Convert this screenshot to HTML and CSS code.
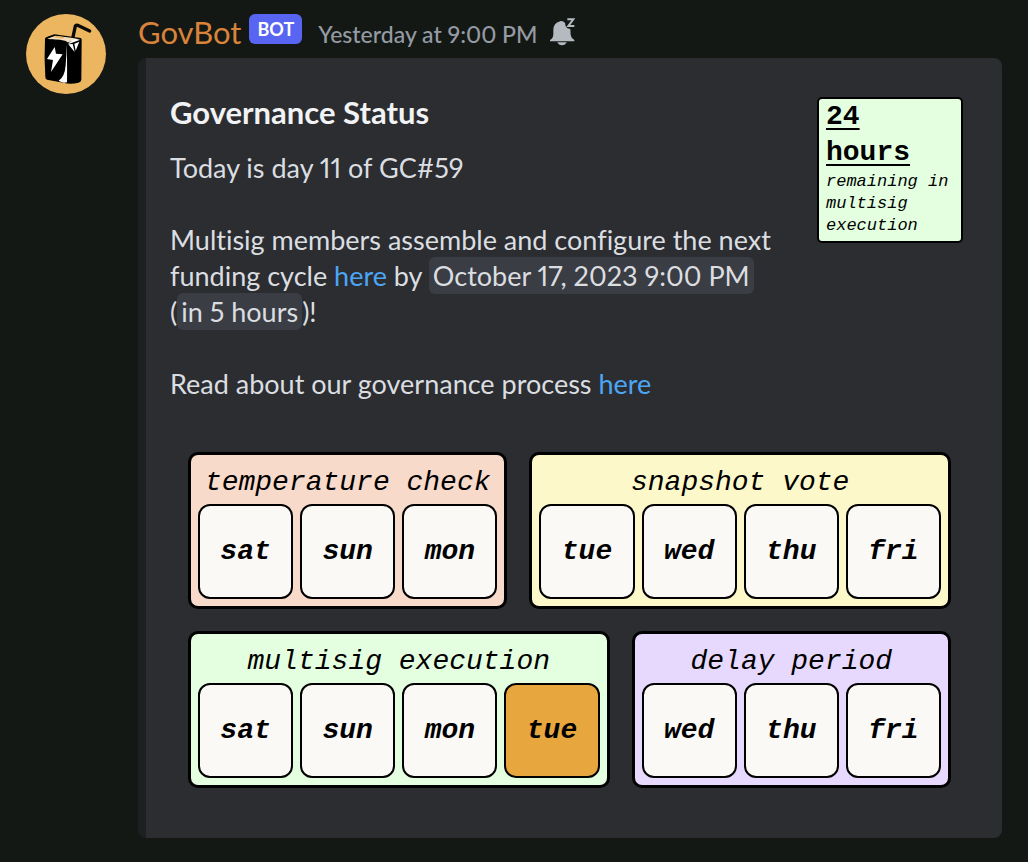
FILE: index.html
```html
<!DOCTYPE html>
<html lang="en">
<head>
<meta charset="utf-8">
<title>GovBot</title>
<link rel="stylesheet" href="styles.css">
</head>
<body>
<article class="message">
  <svg class="avatar" viewBox="48 42 240 240" aria-hidden="true">
    <circle cx="168" cy="162" r="120" fill="#ebb65f"/>
    <path d="M188 116 196 78Q198 74 203 76L239 93" fill="none" stroke="#0a0a08" stroke-width="10" stroke-linecap="round" stroke-linejoin="round"/>
    <path d="M105 116Q106 112 112 110L133 103 212 114Q216 116 215 121L214 240Q213 246 205 248 182 254 160 248L111 239Q106 237 106 231Q102 175 105 116Z" fill="#000"/>
    <path d="M112 116 136 107 184 113 208 118 174 127Z" fill="#f3dfc0"/>
    <path d="M130 112 140 108 164 112 158 116Z" fill="#ebb65f"/>
    <path d="M112 117 165 128 171 124 150 119Z" fill="#000"/>
    <path d="M174 130 193 118 211 119 178 131Z" fill="#fff"/>
    <path d="M175 133 188 132 194 156Z" fill="#fff"/>
    <path d="M193 131 208 125 197 152Z" fill="#fff"/>
    <path d="M169 134Q172 165 171 247L162 248Q153 247 146 242 164 232 167 196 170 165 169 134Z" fill="#fff"/>
    <path d="M134 141 111 177 129 180 123 216 158 163 138 161Z" fill="#fff"/>
  </svg>
  <div class="content">
    <header class="header">
      <span class="name">GovBot</span>
      <span class="badge">BOT</span>
      <time class="time">Yesterday at 9:00 PM</time>
      <svg class="bell" viewBox="960 50 78 90" role="img" aria-label="Silent message">
        <path d="M996 62Q1004 62 1008 68 1008 79 1015 84L1024 86 1025 104Q1026 113 1036 119V123H963V119Q973 114 973 102V88Q974 68 990 64Q993 62 996 62Z" fill="#b5bac1"/>
        <path d="M985 126H1013Q1009 135 999 135 989 135 985 126Z" fill="#b5bac1"/>
        <path d="M1015 57H1033L1018 77H1036" fill="none" stroke="#b5bac1" stroke-width="6"/>
      </svg>
    </header>
    <section class="embed">
      <div class="summary">
        <div class="copy">
          <h1 class="title">Governance Status</h1>
          <p class="text">Today is day 11 of GC#59</p>
          <p class="text">Multisig members assemble and configure the next funding cycle <a href="#">here</a> by <time class="stamp">October 17, 2023 9:00 PM</time> (<time class="stamp">in 5 hours</time>)!</p>
          <p class="text">Read about our governance process <a href="#">here</a></p>
        </div>
        <aside class="countdown">
          <strong class="hours">24 hours</strong>
          <em class="remaining">remaining in multisig execution</em>
        </aside>
      </div>
      <div class="calendar">
        <div class="week">
          <section class="phase three peach">
            <h2 class="label">temperature check</h2>
            <div class="days"><span class="day">sat</span><span class="day">sun</span><span class="day">mon</span></div>
          </section>
          <section class="phase four yellow">
            <h2 class="label">snapshot vote</h2>
            <div class="days"><span class="day">tue</span><span class="day">wed</span><span class="day">thu</span><span class="day">fri</span></div>
          </section>
        </div>
        <div class="week">
          <section class="phase four green">
            <h2 class="label">multisig execution</h2>
            <div class="days"><span class="day">sat</span><span class="day">sun</span><span class="day">mon</span><span class="day today">tue</span></div>
          </section>
          <section class="phase three purple">
            <h2 class="label">delay period</h2>
            <div class="days"><span class="day">wed</span><span class="day">thu</span><span class="day">fri</span></div>
          </section>
        </div>
      </div>
    </section>
  </div>
</article>
</body>
</html>
```
FILE: styles.css
```css
body {
  margin: 0;
  background: #141815;
  color: #dbdee1;
  font-family: Lato, "Liberation Sans", sans-serif;
  font-variant-ligatures: none;
  font-variant-numeric: proportional-nums;
}

.message {
  display: flex;
  align-items: flex-start;
  gap: 32px;
  padding: 14px 26px 24px;
}

.avatar {
  flex: none;
  width: 80px;
  height: 80px;
}

.content {
  flex: 1;
  min-width: 0;
}

.header {
  display: flex;
  align-items: center;
  height: 36px;
  margin-bottom: 8px;
}

.name {
  margin-right: 8px;
  color: #d9833b;
  font-size: 31px;
  line-height: 36px;
}

.badge {
  align-self: flex-start;
  margin-right: 16px;
  padding: 0 8px;
  border-radius: 6px;
  background: #5865f2;
  color: #fff;
  font-size: 18px;
  font-weight: 700;
  line-height: 30px;
}

.time {
  margin-right: 12px;
  padding-top: 4px;
  color: #949ba4;
  font-size: 23px;
  font-weight: 500;
  line-height: 32px;
}

.bell {
  width: 26px;
  height: 30px;
}

.embed {
  padding: 36px 39px 50px 24px;
  border-left: 8px solid #1e1f22;
  border-radius: 8px;
  background: #2b2d31;
}

.summary {
  display: flex;
  align-items: flex-start;
  justify-content: space-between;
  gap: 24px;
}

.title {
  margin: 0 0 20px;
  color: #f2f3f5;
  font-size: 31px;
  font-weight: 700;
  line-height: 36px;
}

.text {
  margin: 0 0 36px;
  font-size: 27px;
  line-height: 36px;
}

.text a {
  color: #4ba6f5;
  text-decoration: none;
}

.stamp {
  padding: 2px 4px;
  border-radius: 6px;
  background: #3b3d44;
}

.countdown {
  box-sizing: border-box;
  flex: none;
  width: 146px;
  min-height: 146px;
  margin-top: 3px;
  padding: 0 7px;
  border: 2px solid #000;
  border-radius: 5px;
  background: #e4ffe0;
  color: #000;
  font-family: "Liberation Mono", monospace;
}

.hours {
  display: block;
  width: min-content;
  font-size: 28px;
  line-height: 36px;
  text-decoration: underline;
  text-decoration-thickness: 2px;
  text-underline-offset: 4px;
}

.remaining {
  display: block;
  font-size: 17px;
  line-height: 22px;
}

.calendar {
  display: grid;
  gap: 22px;
  margin: 14px 12px 0 18px;
  font-family: "Liberation Mono", monospace;
}

.week {
  display: flex;
  gap: 22px;
}

.phase {
  padding: 7px;
  border: 3px solid #000;
  border-radius: 10px;
  color: #000;
}

.three {
  flex: 299 1 0;
}

.four {
  flex: 401 1 0;
}

.peach {
  background: #f8dacb;
}

.yellow {
  background: #fdf8ca;
}

.green {
  background: #e4ffe0;
}

.purple {
  background: #e7d9fd;
}

.label {
  margin: 0;
  font-size: 28px;
  font-style: italic;
  font-weight: 400;
  line-height: 42px;
  text-align: center;
  white-space: nowrap;
}

.days {
  display: flex;
  gap: 7px;
}

.day {
  display: flex;
  flex: 1;
  box-sizing: border-box;
  align-items: center;
  justify-content: center;
  aspect-ratio: 1;
  border: 2px solid #000;
  border-radius: 12px;
  background: #faf9f6;
  font-size: 28px;
  font-style: italic;
  font-weight: 700;
}

.today {
  background: #e8a63e;
}
```
